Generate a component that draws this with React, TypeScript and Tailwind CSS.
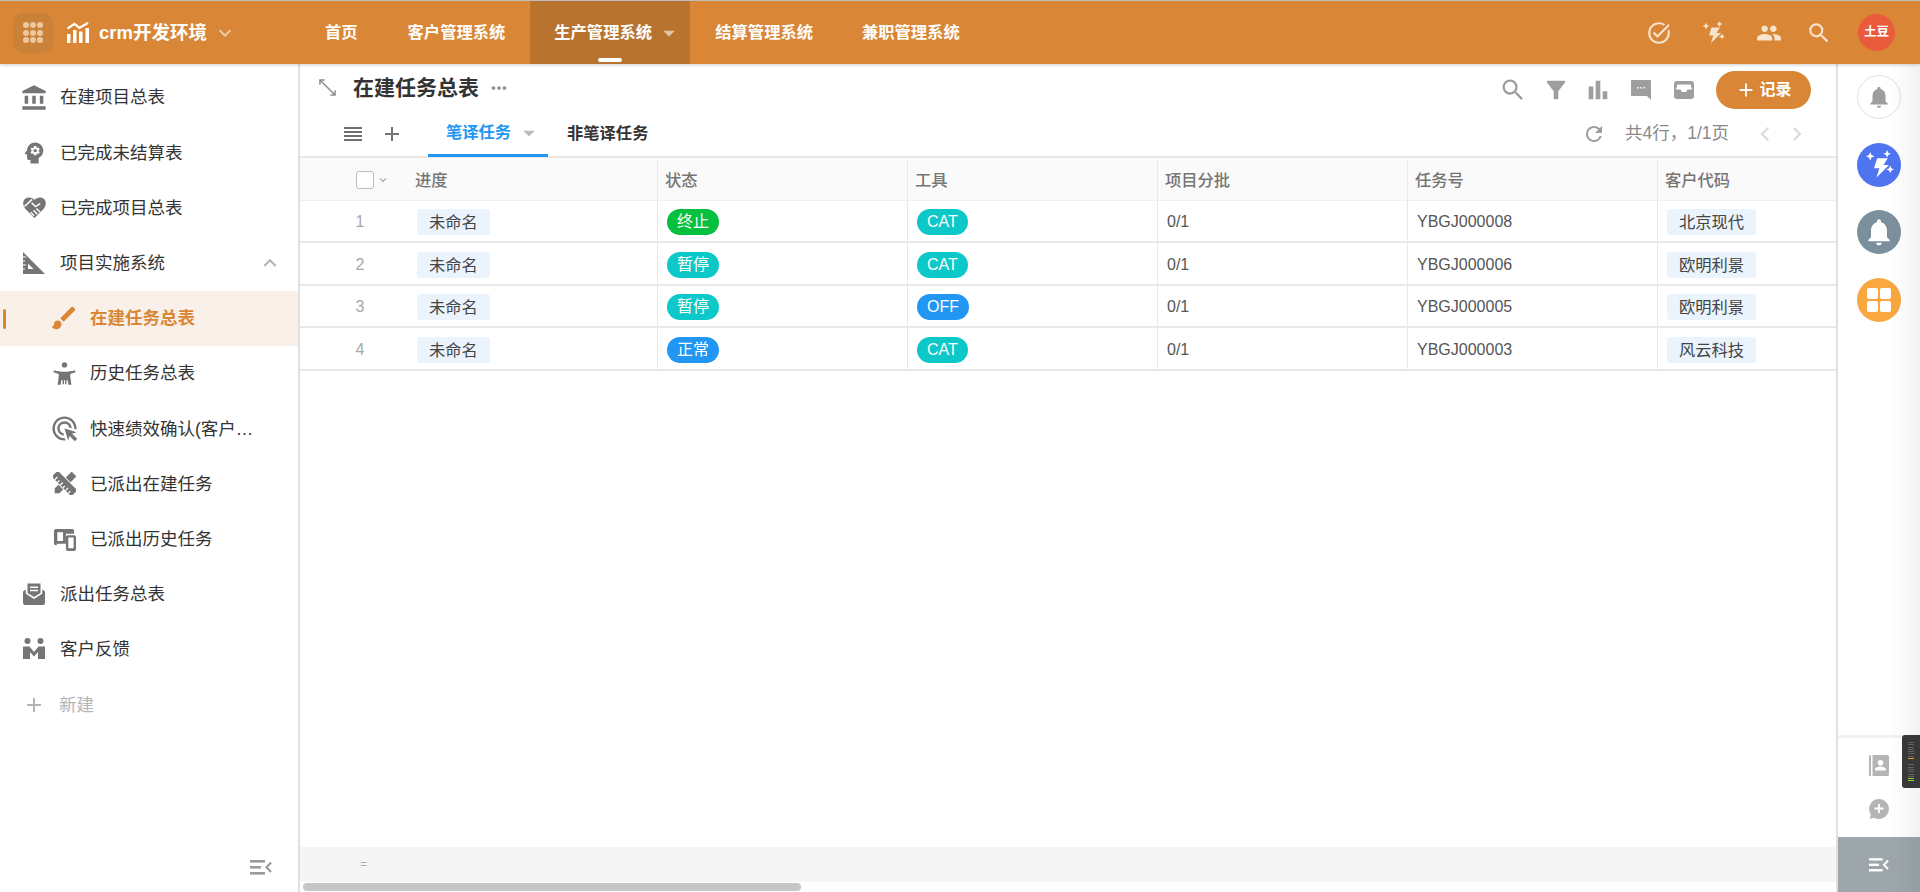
import React from "react";
import {
  MdAccountBalance, MdPsychology, MdBrush, MdAdsClick,
  MdPeople, MdSearch, MdFilterAlt, MdBarChart, MdRefresh, MdNotifications, MdAdd, MdExpandLess,
  MdExpandMore, MdArrowDropDown, MdChevronLeft, MdChevronRight, MdMoreHoriz, MdOutlineTaskAlt, MdReorder,
} from "react-icons/md";

const font = { fontFamily: '"Liberation Sans","Noto Sans CJK SC",sans-serif' };

type IconProps = { className?: string };

const Collapse = ({ className }: IconProps) => (
  <svg viewBox="0 0 22 15" className={className} fill="currentColor">
    <rect x="0" y="0" width="15" height="2.6" />
    <rect x="0" y="6" width="11" height="2.6" />
    <rect x="0" y="12" width="15" height="2.6" />
    <path d="M21 2.5 16.5 7.3 21 12.1" fill="none" stroke="currentColor" strokeWidth="2.2" />
  </svg>
);

const Spark = ({ className }: IconProps) => (
  <svg viewBox="0 0 24 24" className={className} fill="currentColor">
    <path d="M10.500 6.500h8.500l-3.500 5.500H20L10 22l2.300-7.500H8z" />
    <path d="M5 1.500l1 2.500 2.500 1-2.500 1-1 2.500-1-2.500L1.500 5 4 4zM18.500 0l.9 2.100 2.100.9-2.100.9-.9 2.100-.9-2.100-2.100-.9 2.100-.9zM21 12.500l.9 2.100 2.100.9-2.100.9-.9 2.100-.9-2.100-2.100-.9 2.100-.9z" />
  </svg>
);

const Logo = () => (
  <svg viewBox="0 0 22 21" className="w-[22px] h-[21px]" fill="white">
    <rect x="0" y="12" width="3.500" height="9" />
    <rect x="6" y="8" width="3.500" height="13" />
    <rect x="12" y="9.500" width="3.500" height="11.500" />
    <rect x="18.500" y="6" width="3.500" height="15" />
    <path d="M0.500 6.500 7.500 1.800 12.500 6 21 0.800" fill="none" stroke="white" strokeWidth="2.200" />
  </svg>
);

const Bank = ({ className }: IconProps) => <MdAccountBalance className={className} />;

const HandHeart = ({ className }: IconProps) => (
  <svg viewBox="0 0 24 24" className={className}>
    <path d="M12 23 3 14C-1.500 9-.5 2 6 1.500 8.500 1.300 10.500 2.500 12 4c1.500-1.500 3.500-2.700 6-2.500C24.500 2 25.500 9 21 14z" fill="currentColor" />
    <path d="M1.500 11 9.500 3.500M9 7l4 4 5-3M11 15l4 4M14 13l4 4M8 17l3.500 3.500" fill="none" stroke="white" strokeWidth="1.500" />
  </svg>
);

const SetSquare = ({ className }: IconProps) => (
  <svg viewBox="0 0 24 24" className={className} fill="currentColor">
    <path fillRule="evenodd" d="M1 1 23 23H1zM6 12.500V18h5.500z" />
    <path d="M1 6h3M1 10h2M1 14h3M1 18h2" stroke="white" strokeWidth="1.100" />
  </svg>
);

const Baby = ({ className }: IconProps) => (
  <svg viewBox="0 0 24 24" className={className} fill="currentColor">
    <circle cx="12" cy="3" r="2.800" />
    <path d="M1 8.500c3.500 1 7 1.600 11 1.600s7.500-.6 11-1.600l.5 2.200-5.500 1.800v3.500H6v-3.500L.5 10.700z" />
    <path fillRule="evenodd" d="M6 15.500h12l1.200 8.200h-3.200l-.7-4.700H14v4.200h-1.500V19h-1v4.200H10V19H8.700L8 23.700H4.800z" />
  </svg>
);

const Tools = ({ className }: IconProps) => (
  <svg viewBox="0 0 24 24" className={className} fill="currentColor">
    <g transform="rotate(45 12 12)">
      <rect x="8.500" y="-2" width="7" height="8.500" />
      <path d="M8.500 17.500h7V23L12 26.500 8.500 23z" />
    </g>
    <g transform="rotate(-45 12 12)">
      <rect x="7.500" y="-2.500" width="9" height="29" />
      <path d="M7.500 2h4M7.500 6h3M7.500 10h4M7.500 14h3M7.500 18h4M7.500 22h3" stroke="white" strokeWidth="1.300" />
    </g>
  </svg>
);

const Devices = ({ className }: IconProps) => (
  <svg viewBox="0 0 24 24" className={className} fill="currentColor">
    <path fillRule="evenodd" d="M3 1h17a2 2 0 0 1 2 2v3H13.500v10.500H4V18H3a2 2 0 0 1-2-2V3a2 2 0 0 1 2-2zM4.500 4.500v9h6v-9z" />
    <path fillRule="evenodd" d="M15.500 7.500H22a2 2 0 0 1 2 2V22a2 2 0 0 1-2 2h-6.500a2 2 0 0 1-2-2V9.500a2 2 0 0 1 2-2zM16 10v11h5.500V10z" />
  </svg>
);

const Mail = ({ className }: IconProps) => (
  <svg viewBox="0 0 24 24" className={className} fill="currentColor">
    <path d="M5.500 1.500h13V11l-6.500 4-6.500-4z M8 4.500v1.500h8V4.500z M8 7.800v1.500h8V7.800z" fillRule="evenodd" />
    <path d="M1 9.500 3.800 7.500v4.300L12 17l8.200-5.200V7.500L23 9.500V21a2 2 0 0 1-2 2H3a2 2 0 0 1-2-2z" />
  </svg>
);

const TwoPeople = ({ className }: IconProps) => (
  <svg viewBox="0 0 24 24" className={className} fill="currentColor">
    <circle cx="5.500" cy="4" r="3" />
    <circle cx="18.500" cy="4" r="3" />
    <path d="M1 9.500h6.500L12 15l4.500-5.500H23V22h-7v-7l-4 4.500L8 15v7H1z" />
  </svg>
);

const Contact = ({ className }: IconProps) => (
  <svg viewBox="0 0 20 21" className={className} fill="currentColor">
    <path d="M0 1.500A1.500 1.500 0 0 1 1.500 0H2v21h-.5A1.500 1.500 0 0 1 0 19.500z" />
    <path fillRule="evenodd" d="M3.500 0H18.500A1.500 1.500 0 0 1 20 1.500v18a1.500 1.500 0 0 1-1.500 1.500H3.500zM11.500 5a2.800 2.800 0 1 0 0 5.600 2.800 2.800 0 0 0 0-5.600zM6 15.500h11v-1.300c0-1.800-3.600-2.700-5.500-2.700S6 12.400 6 14.200z" />
  </svg>
);

const ChatPlus = ({ className }: IconProps) => (
  <svg viewBox="0 0 20 20" className={className}>
    <path d="M10 0a10 10 0 1 1-5 18.700L.8 20 1.800 15.500A10 10 0 0 1 10 0z" fill="currentColor" />
    <path d="M10 5v9M5.500 9.500h9" stroke="white" strokeWidth="1.800" />
  </svg>
);

const CommentDots = ({ className }: IconProps) => (
  <svg viewBox="0 0 20 20" className={className} fill="currentColor">
    <path fillRule="evenodd" d="M1 0h18a1 1 0 0 1 1 1v19l-4-4H1a1 1 0 0 1-1-1V1a1 1 0 0 1 1-1zM6 7h1.500v1.500H6zM9.300 7h1.500v1.500H9.300zM12.500 7H14v1.500h-1.500z" />
  </svg>
);

const Tray = ({ className }: IconProps) => (
  <svg viewBox="0 0 20 18" className={className}>
    <rect x="0" y="0" width="20" height="18" rx="3" fill="currentColor" />
    <path d="M3.500 3.500h13L18 8.500h-4.500L12 11H8L6.500 8.500H2z" fill="white" />
  </svg>
);

const ExpandDiag = ({ className }: IconProps) => (
  <svg viewBox="0 0 18 18" className={className} fill="none" stroke="currentColor" strokeWidth="1.600">
    <path d="M1 6V1h5M1 1l16 16M17 12v5h-5" />
  </svg>
);

const Row = ({ icon, label, sub, active, right }: { icon: React.ReactNode; label: string; sub?: boolean; active?: boolean; right?: React.ReactNode }) => (
  <div className={`relative flex items-center h-[55.2px] ${sub ? "pl-[52px]" : "pl-[22px]"} ${active ? "bg-[#f9f0e9]" : ""}`}>
    {active && <div className="absolute left-[3px] top-[18px] w-[3px] h-[20px] rounded-sm bg-[#d98736]" />}
    <span className={`flex items-center justify-center w-[24px] h-[24px] shrink-0 ${active ? "text-[#d98736]" : "text-[#757575]"}`}>{icon}</span>
    <span className={`${sub ? "ml-[14px] w-[180px]" : "ml-[14px]"} text-[17.500px] truncate ${active ? "text-[#d98736] font-bold" : "text-[#333333]"}`}>{label}</span>
    {right}
  </div>
);

const cols = [
  ["未命名", "终止", "bg-[#05c03f]", "CAT", "bg-[#0cc8c8]", "YBGJ000008", "北京现代"],
  ["未命名", "暂停", "bg-[#0cc8c8]", "CAT", "bg-[#0cc8c8]", "YBGJ000006", "欧明利景"],
  ["未命名", "暂停", "bg-[#0cc8c8]", "OFF", "bg-[#2196f3]", "YBGJ000005", "欧明利景"],
  ["未命名", "正常", "bg-[#2196f3]", "CAT", "bg-[#0cc8c8]", "YBGJ000003", "风云科技"],
];

const Tag = ({ children }: { children: React.ReactNode }) => (
  <span className="inline-flex items-center h-[26px] px-[12px] rounded-[3px] bg-[#ebf3fd] text-[16.300px] text-[#444444]">{children}</span>
);
const Pill = ({ children, color }: { children: React.ReactNode; color: string }) => (
  <span className={`inline-flex items-center h-[26px] px-[10px] rounded-[13px] text-white text-[16px] ${color}`}>{children}</span>
);

const Cell = ({ children, className = "" }: { children?: React.ReactNode; className?: string }) => (
  <div className={`flex items-center w-[250px] shrink-0 border-r border-[#e8e8e8] ${className}`}>{children}</div>
);

export default function App() {
  return (
    <div style={font} className="relative flex flex-col w-[1920px] h-[892px] overflow-hidden bg-white">
      <header className="relative z-10 flex items-stretch h-[64px] shrink-0 bg-[#d98736] border-t border-[#bdbdbd] shadow-[0_1px_3px_rgba(0,0,0,0.2)] text-white">
        <div className="flex items-center w-[300px] shrink-0 pl-[13px]">
          <div className="grid grid-cols-3 gap-[1.500px] place-content-center w-[40px] h-[40px] rounded-[10px] bg-[#ca8138] px-[10px]">
            {Array.from({ length: 9 }).map((_, i) => (
              <span key={i} className="w-[6px] h-[6px] rounded-full bg-[#eec69f]" />
            ))}
          </div>
          <span className="ml-[14px]"><Logo /></span>
          <span className="ml-[10px] text-[18.500px] font-bold">crm开发环境</span>
          <MdExpandMore className="ml-[6px] text-[24px] text-[#efcba6]" />
        </div>
        <nav className="flex items-stretch text-[16.300px] font-bold">
          <a className="flex items-center px-[25px]">首页</a>
          <a className="flex items-center px-[25px]">客户管理系统</a>
          <a className="relative flex items-center w-[160px] pl-[24px] bg-[#b8732f]">
            生产管理系统
            <MdArrowDropDown className="ml-[3px] text-[28px] text-[#e3c5a6]" />
            <span className="absolute left-[68px] bottom-[2px] w-[24px] h-[4px] rounded-sm bg-white" />
          </a>
          <a className="flex items-center px-[25px]">结算管理系统</a>
          <a className="flex items-center px-[24px]">兼职管理系统</a>
        </nav>
        <div className="flex items-center ml-auto pr-[25px] text-[#f8e3cd]">
          <MdOutlineTaskAlt className="text-[26px]" />
          <Spark className="ml-[29px] w-[24px] h-[24px]" />
          <MdPeople className="ml-[31px] text-[26px]" />
          <MdSearch className="ml-[24px] text-[26px]" />
          <span className="flex items-center justify-center ml-[26px] w-[37px] h-[37px] rounded-full bg-[#ea5b3c] text-[12.500px] font-bold text-white">土豆</span>
        </div>
      </header>

      <div className="flex flex-1 min-h-0">
        <aside className="flex flex-col w-[300px] shrink-0 border-r-2 border-[#e0e0e0] pt-[6px]">
          <Row icon={<Bank className="text-[28px] shrink-0" />} label="在建项目总表" />
          <Row icon={<MdPsychology className="text-[28px] shrink-0" />} label="已完成未结算表" />
          <Row icon={<HandHeart className="w-[23px] h-[23px] shrink-0" />} label="已完成项目总表" />
          <Row icon={<SetSquare className="w-[24px] h-[24px] shrink-0" />} label="项目实施系统" right={<MdExpandLess className="ml-auto mr-[15px] text-[26px] text-[#b5b5b5]" />} />
          <Row sub active icon={<MdBrush className="text-[30px] shrink-0" />} label="在建任务总表" />
          <Row sub icon={<Baby className="w-[23px] h-[23px] shrink-0" />} label="历史任务总表" />
          <Row sub icon={<MdAdsClick className="text-[29px] shrink-0" />} label="快速绩效确认(客户…" />
          <Row sub icon={<Tools className="w-[23px] h-[23px] shrink-0" />} label="已派出在建任务" />
          <Row sub icon={<Devices className="w-[23px] h-[23px] shrink-0" />} label="已派出历史任务" />
          <Row icon={<Mail className="w-[24px] h-[24px] shrink-0" />} label="派出任务总表" />
          <Row icon={<TwoPeople className="w-[24px] h-[24px] shrink-0" />} label="客户反馈" />
          <div className="flex items-center h-[55.200px] pl-[22px] text-[#b5b5b5]">
            <MdAdd className="text-[24px]" />
            <span className="ml-[13px] text-[17.500px]">新建</span>
          </div>
          <div className="flex justify-end mt-auto pr-[26px] pb-[17px]">
            <Collapse className="w-[22px] h-[15px] text-[#9a9a9a]" />
          </div>
        </aside>

        <main className="flex flex-col w-[1536px] shrink-0 min-w-0">
          <div className="flex items-center h-[47px] shrink-0 pl-[19px] pr-[25px]">
            <ExpandDiag className="w-[17px] h-[17px] text-[#8e8e8e]" />
            <h1 className="ml-[17px] text-[21px] font-bold text-[#333333]">在建任务总表</h1>
            <MdMoreHoriz className="ml-[9px] text-[22px] text-[#8e8e8e]" />
            <div className="flex items-center ml-auto pt-[4px] text-[#9e9e9e]">
              <MdSearch className="text-[28px]" />
              <MdFilterAlt className="ml-[15px] text-[28px]" />
              <MdBarChart className="ml-[14px] text-[28px]" />
              <CommentDots className="ml-[19px] w-[20px] h-[20px]" />
              <Tray className="ml-[23px] w-[20px] h-[18px]" />
              <button className="flex items-center justify-center ml-[22px] w-[95px] h-[38px] rounded-[19px] bg-[#d98736] text-white text-[16px] font-bold">
                <MdAdd className="text-[22px] mr-[2px]" />记录
              </button>
            </div>
          </div>
          <div className="flex items-stretch h-[47px] shrink-0 border-b-2 border-[#e8e8e8] pl-[41px]">
            <div className="flex items-center">
              <MdReorder className="text-[24px] text-[#6f6f6f]" />
              <MdAdd className="ml-[15px] text-[24px] text-[#757575]" />
            </div>
            <div className="relative flex items-center w-[120px] ml-[24px] pl-[18px] border-b-[3px] border-[#2196f3] -mb-[1px] text-[16.300px] font-bold text-[#2196f3]">
              笔译任务
              <MdArrowDropDown className="ml-[4px] text-[28px] text-[#bdbdbd]" />
            </div>
            <div className="flex items-center ml-[19px] text-[16.300px] font-bold text-[#333333]">非笔译任务</div>
            <div className="flex items-center ml-auto pr-[25px] text-[#9e9e9e]">
              <MdRefresh className="text-[24px]" />
              <span className="ml-[19px] text-[17.500px] text-[#8a8a8a]">共4行，1/1页</span>
              <MdChevronLeft className="ml-[22px] text-[28px] text-[#dddddd]" />
              <MdChevronRight className="ml-[4px] text-[28px] text-[#dddddd]" />
            </div>
          </div>

          <div className="flex-1 min-h-0 overflow-hidden">
            <div className="flex h-[42.500px] pt-[2px] bg-[#fafafa] text-[16.300px] font-medium text-[#757575] border-b border-[#f0f0f0]">
              <div className="flex items-center w-[108px] shrink-0 pl-[56px]">
                <span className="w-[18px] h-[18px] rounded-[3px] border border-[#bdbdbd] bg-white" />
                <MdExpandMore className="ml-[2px] text-[14px] text-[#a0a0a0]" />
              </div>
              <Cell className="pl-[7px]">进度</Cell>
              <Cell className="pl-[7px]">状态</Cell>
              <Cell className="pl-[7px]">工具</Cell>
              <Cell className="pl-[7px]">项目分批</Cell>
              <Cell className="pl-[7px]">任务号</Cell>
              <div className="flex items-center pl-[7px]">客户代码</div>
            </div>
            {cols.map((r, i) => (
              <div key={i} className="flex h-[42.500px] border-b-2 border-[#e8e8e8] text-[16px] text-[#555555]">
                <div className="flex items-center justify-center w-[108px] shrink-0 pl-[12px] pt-[3px] text-[#a8a8a8]">{i + 1}</div>
                <Cell className="pl-[9px] pt-[3px]"><Tag>{r[0]}</Tag></Cell>
                <Cell className="pl-[9px] pt-[3px]"><Pill color={r[2]}>{r[1]}</Pill></Cell>
                <Cell className="pl-[9px] pt-[3px]"><Pill color={r[4]}>{r[3]}</Pill></Cell>
                <Cell className="pl-[9px] pt-[3px]">0/1</Cell>
                <Cell className="pl-[9px] pt-[3px]">{r[5]}</Cell>
                <div className="flex items-center pl-[9px] pt-[3px]"><Tag>{r[6]}</Tag></div>
              </div>
            ))}
          </div>

          <div className="flex items-center h-[35px] shrink-0 bg-[#f5f5f5] pl-[60px] pb-[2px] text-[12px] text-[#aaaaaa]">=</div>
          <div className="h-[10px] shrink-0 pt-[1px] pl-[3px]">
            <div className="w-[498px] h-[8px] rounded-[4px] bg-[#c6c6c6]" />
          </div>
        </main>

        <aside className="flex flex-col flex-1 min-w-0 border-l-2 border-[#e0e0e0]">
          <div className="flex flex-col items-center pt-[11px] gap-[23.500px]">
            <div className="flex items-center justify-center w-[44px] h-[44px] rounded-full border border-[#e0e0e0] text-[#9e9e9e]">
              <MdNotifications className="text-[26px]" />
            </div>
            <div className="flex items-center justify-center w-[44px] h-[44px] rounded-full bg-[#4f74f0] text-white">
              <Spark className="w-[30px] h-[30px]" />
            </div>
            <div className="flex items-center justify-center w-[44px] h-[44px] rounded-full bg-[#7b909c] text-white">
              <MdNotifications className="text-[32px]" />
            </div>
            <div className="flex items-center justify-center w-[44px] h-[44px] rounded-full bg-[#f9a83f]">
              <div className="grid grid-cols-2 gap-[2px]">
                {[0, 1, 2, 3].map((k) => <span key={k} className="w-[11px] h-[11px] rounded-[2px] bg-white" />)}
              </div>
            </div>
          </div>
          <div className="mt-auto border-t-[3px] border-[#f2f2f2] flex flex-col items-center pt-[17px]">
            <Contact className="w-[20px] h-[21px] text-[#b5b5b5]" />
            <ChatPlus className="mt-[23px] w-[20px] h-[20px] text-[#b5b5b5]" />
            <div className="flex items-center justify-center mt-[18px] w-full h-[55px] bg-[#9ca6ab]">
              <Collapse className="w-[20px] h-[14px] text-white" />
            </div>
          </div>
        </aside>
      </div>

      <div className="absolute right-0 top-[735px] w-[18px] h-[53px] rounded-l-[3px] bg-[#3a3a3a] flex flex-col gap-[1.300px] pl-[6px] pt-[7px]">
        {Array.from({ length: 16 }).map((_, i) => (
          <span key={i} className={`w-[6px] h-[1px] shrink-0 ${i === 7 ? "bg-[#f59e1b]" : i >= 14 ? "bg-[#8fdc3a]" : "bg-[#666666]"} ${i === 8 ? "mt-[4px]" : ""}`} />
        ))}
      </div>
      <div className="absolute right-0 top-0 bottom-0 w-[30px] pointer-events-none bg-gradient-to-r from-transparent to-black/5" />
    </div>
  );
}
